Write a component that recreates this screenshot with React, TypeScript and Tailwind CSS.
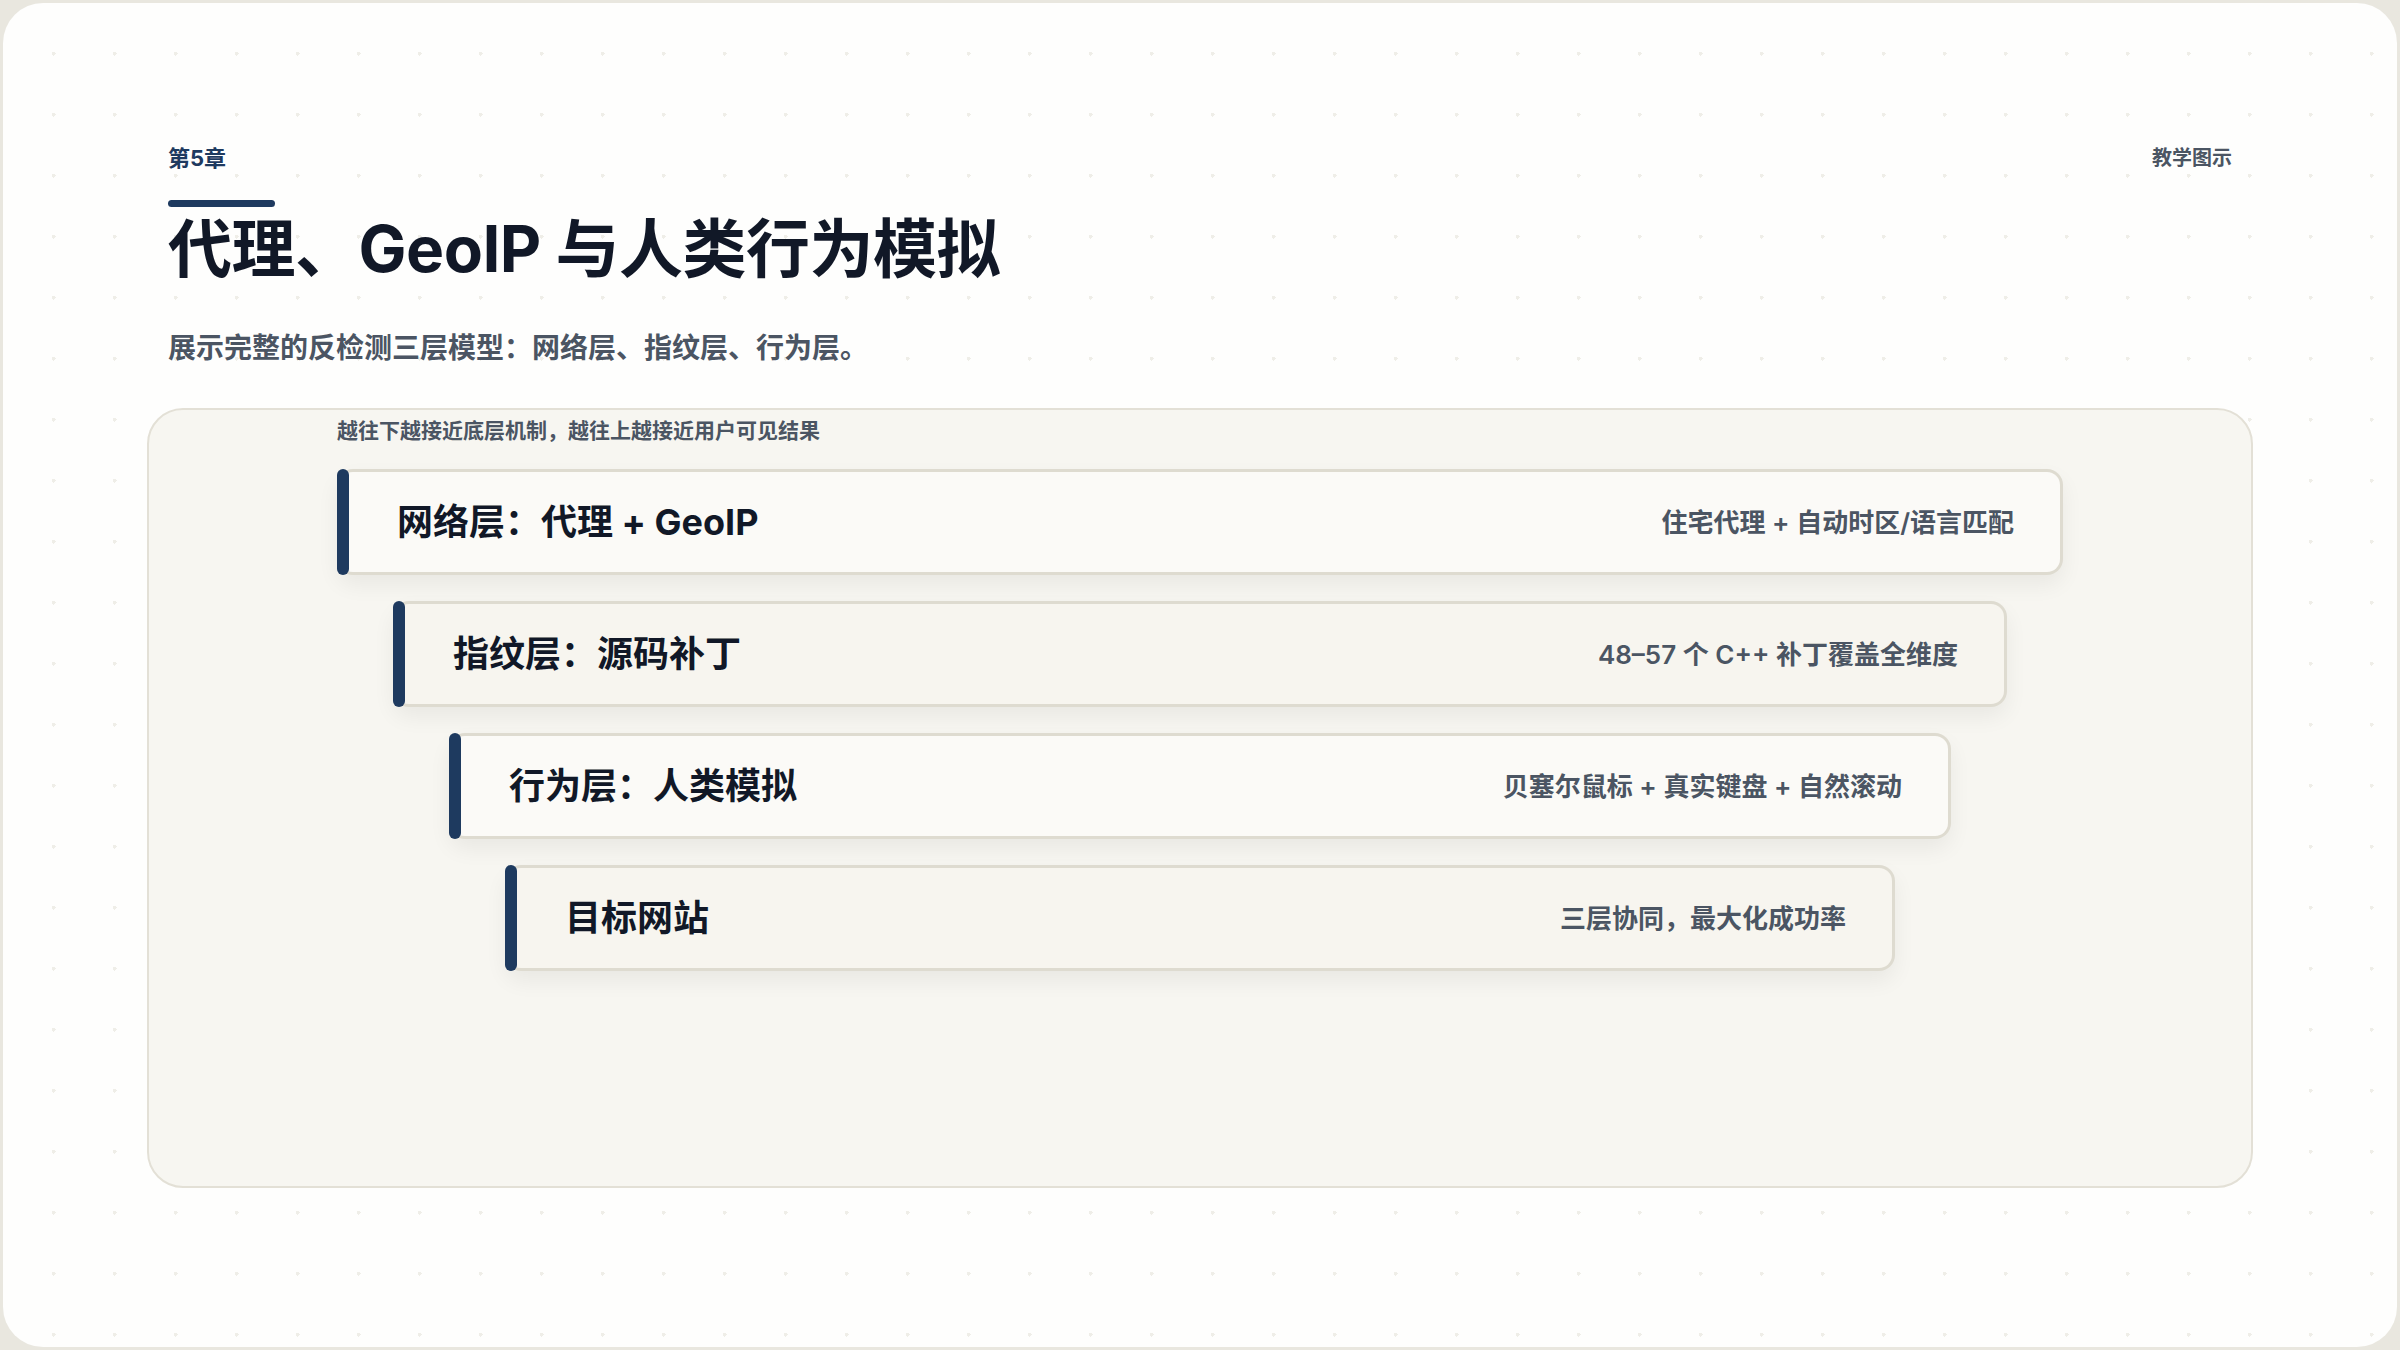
import React from "react";

const rows = [
  { t: "网络层：代理 + GeoIP", d: "住宅代理 + 自动时区/语言匹配", w: "w-[1726px]", bg: "bg-[#fbfaf7]" },
  { t: "指纹层：源码补丁", d: "48–57 个 C++ 补丁覆盖全维度", w: "w-[1614px]", bg: "bg-[#f7f5ef]" },
  { t: "行为层：人类模拟", d: "贝塞尔鼠标 + 真实键盘 + 自然滚动", w: "w-[1502px]", bg: "bg-[#fbfaf7]" },
  { t: "目标网站", d: "三层协同，最大化成功率", w: "w-[1390px]", bg: "bg-[#f7f5ef]" },
];

export default function App() {
  return (
    <div
      className="w-[2400px] h-[1350px] bg-[#e9e7df] p-[3px] overflow-hidden"
      style={{ fontFamily: "Inter, 'Noto Sans CJK SC', sans-serif" }}
    >
      <div className="w-full h-full rounded-[40px] bg-[#fefefd] bg-[radial-gradient(circle,#efeee8_2px,transparent_2px)] bg-[size:61px_61px] bg-[position:20px_20px] px-[165px] pt-[140px] flex flex-col">
        <div className="flex justify-between items-center h-[30px]">
          <div className="text-[22px] font-bold text-[#1e3a5f]">第5章</div>
          <div className="text-[20px] font-semibold text-[#4b5563]">教学图示</div>
        </div>
        <div className="mt-[27px] w-[107px] h-[7px] rounded-full bg-[#1e3a5f]" />
        <h1 className="mt-[3px] text-[64px] leading-[77px] font-bold text-[#111827] tracking-[-0.5px]">代理、GeoIP 与人类行为模拟</h1>
        <p className="mt-[41px] text-[28px] leading-[40px] font-semibold text-[#4b5563]">展示完整的反检测三层模型：网络层、指纹层、行为层。</p>
        <div className="mt-[40px] -mx-[21px] h-[780px] rounded-[36px] border-2 border-[#e3e0d6] bg-[#f7f6f1] flex flex-col items-center pt-[6px]">
          <div className="w-[1726px] text-[21px] leading-[30px] font-semibold text-[#4b5563]">越往下越接近底层机制，越往上越接近用户可见结果</div>
          <div className="mt-[23px] flex flex-col items-center gap-[26px]">
            {rows.map((r, i) => (
              <div
                key={i}
                className={`${r.w} ${r.bg} h-[106px] rounded-[16px] border-[3px] border-l-0 border-[#dedbd0] shadow-[0_10px_22px_rgba(0,0,0,0.06)] flex items-center relative pl-[60px] pr-[46px]`}
              >
                <div className="absolute left-0 top-[-3px] bottom-[-3px] w-[12px] rounded-full bg-[#1e3a5f]" />
                <div className="flex-1 text-[36px] font-bold text-[#111827]">{r.t}</div>
                <div className="text-[26px] font-semibold text-[#4b5563]">{r.d}</div>
              </div>
            ))}
          </div>
        </div>
      </div>
    </div>
  );
}
